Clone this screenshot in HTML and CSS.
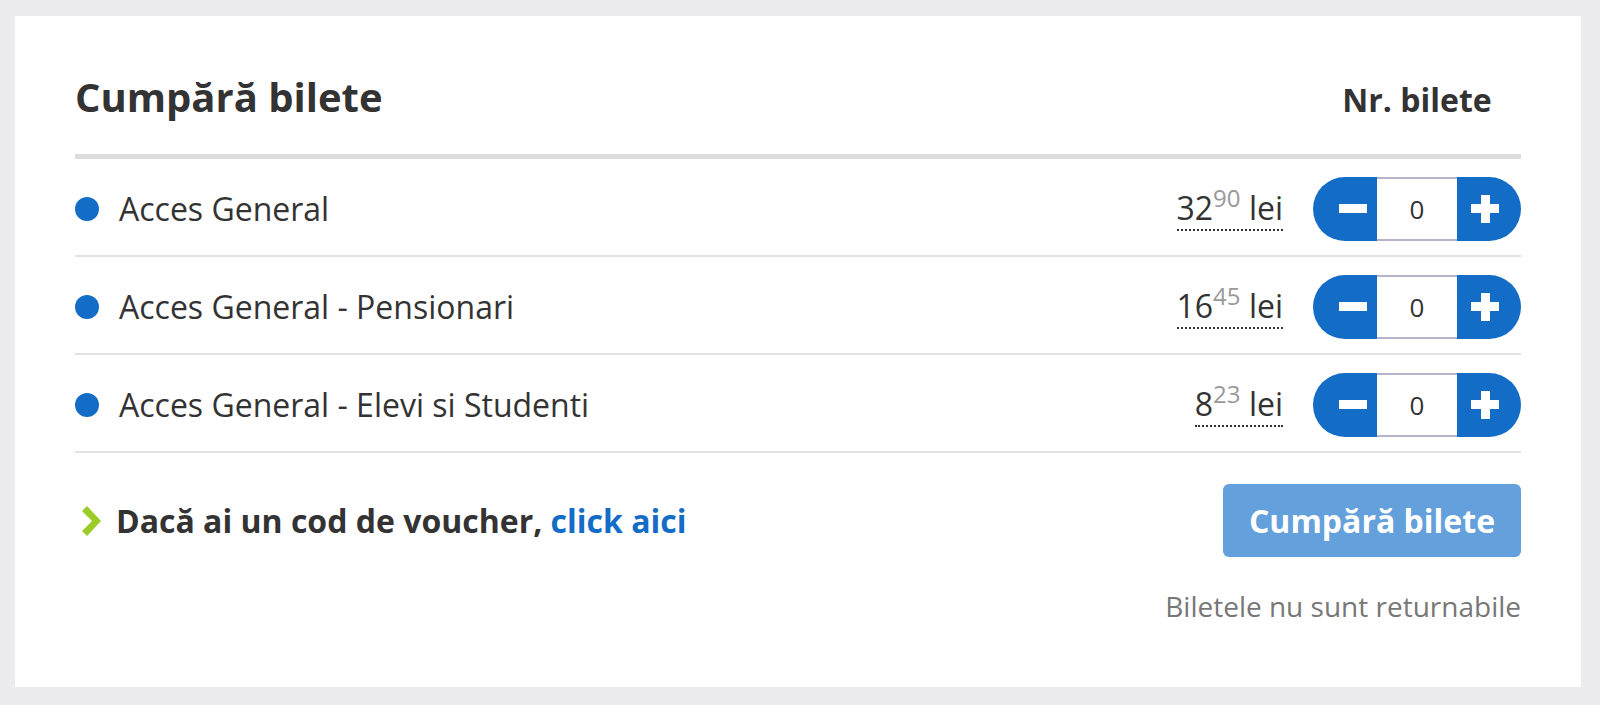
FILE: index.html
```html
<!DOCTYPE html>
<html lang="ro">
<head>
<meta charset="utf-8">
<title>Cumpără bilete</title>
<link rel="stylesheet" href="styles.css">
</head>
<body>
<div class="page">
  <div class="card">
    <div class="head">
      <h1 class="title">Cumpără bilete</h1>
      <div class="col-qty">Nr. bilete</div>
    </div>
    <ul class="tickets">
      <li class="ticket">
        <span class="dot"></span>
        <span class="name">Acces General</span>
        <span class="price">32<sup>90</sup> lei</span>
        <div class="stepper">
          <button class="step minus" type="button"><span class="minus-icon"></span></button>
          <span class="qty">0</span>
          <button class="step plus" type="button"><span class="plus-icon"></span></button>
        </div>
      </li>
      <li class="ticket">
        <span class="dot"></span>
        <span class="name">Acces General - Pensionari</span>
        <span class="price">16<sup>45</sup> lei</span>
        <div class="stepper">
          <button class="step minus" type="button"><span class="minus-icon"></span></button>
          <span class="qty">0</span>
          <button class="step plus" type="button"><span class="plus-icon"></span></button>
        </div>
      </li>
      <li class="ticket">
        <span class="dot"></span>
        <span class="name">Acces General - Elevi si Studenti</span>
        <span class="price">8<sup>23</sup> lei</span>
        <div class="stepper">
          <button class="step minus" type="button"><span class="minus-icon"></span></button>
          <span class="qty">0</span>
          <button class="step plus" type="button"><span class="plus-icon"></span></button>
        </div>
      </li>
    </ul>
    <div class="actions">
      <p class="voucher">
        <svg class="chev" viewBox="0 0 20 30" width="20" height="30" aria-hidden="true"><polygon points="0,5 5,0 19,15 5,30 0,25 10,15" fill="#9dcb27"/></svg>
        <span>Dacă ai un cod de voucher, <a href="#" class="link">click aici</a></span>
      </p>
      <button class="buy" type="button">Cumpără bilete</button>
    </div>
    <p class="note">Biletele nu sunt returnabile</p>
  </div>
</div>
</body>
</html>
```

FILE: styles.css
```css
* { box-sizing: border-box; }

html, body {
  margin: 0;
  padding: 0;
}

body {
  background: #ecebf0;
  font-family: "Open Sans", "Noto Sans", "Liberation Sans", sans-serif;
  color: #333333;
}

.page {
  padding: 16px 19px 18px 15px;
}

.card {
  background: #ffffff;
  padding: 0 60px 62px 60px;
  height: 671px;
}

.head {
  display: flex;
  align-items: baseline;
  justify-content: space-between;
  padding-top: 57px;
  padding-bottom: 33px;
  border-bottom: 5px solid #dddddd;
}

.title {
  margin: 0;
  font-size: 40px;
  line-height: 48px;
  font-weight: 700;
  color: #333333;
}

.col-qty {
  width: 208px;
  text-align: center;
  font-size: 32px;
  font-weight: 700;
  color: #333333;
}

.tickets {
  list-style: none;
  margin: 0;
  padding: 0;
}

.ticket {
  display: flex;
  align-items: center;
  height: 98px;
  padding-top: 3px;
  border-bottom: 2px solid #e2e1e7;
}

.dot {
  width: 24px;
  height: 24px;
  border-radius: 50%;
  background: #136dc7;
  flex: none;
  margin-right: 20px;
}

.name {
  flex: 1;
  font-size: 32px;
  color: #333333;
}

.price {
  display: inline-block;
  font-size: 32px;
  color: #333333;
  border-bottom: 2px dotted #333333;
  margin-right: 30px;
}

.price sup {
  font-size: 24px;
  line-height: 0;
  vertical-align: 13px;
  color: #999999;
}

.stepper {
  display: flex;
  width: 208px;
  height: 64px;
  flex: none;
}

.step {
  width: 64px;
  height: 64px;
  border: 0;
  padding: 0;
  margin: 0;
  background: #136dc7;
  display: flex;
  align-items: center;
  cursor: pointer;
}

.minus {
  border-radius: 32px 0 0 32px;
  justify-content: flex-end;
  padding-right: 10px;
}

.plus {
  border-radius: 0 32px 32px 0;
  justify-content: flex-start;
  padding-left: 14px;
}

.minus-icon {
  display: block;
  width: 28px;
  height: 9px;
  background: #ffffff;
}

.plus-icon {
  display: block;
  width: 28px;
  height: 28px;
  background:
    linear-gradient(#ffffff, #ffffff) center / 28px 9px no-repeat,
    linear-gradient(#ffffff, #ffffff) center / 9px 28px no-repeat;
}

.qty {
  width: 80px;
  height: 64px;
  border-top: 2px solid #b5b4c9;
  border-bottom: 2px solid #b5b4c9;
  display: flex;
  align-items: center;
  justify-content: center;
  font-size: 26px;
  color: #333333;
}

.actions {
  display: flex;
  align-items: center;
  justify-content: space-between;
  margin-top: 31px;
}

.voucher {
  margin: 0;
  display: flex;
  align-items: center;
  font-size: 32px;
  font-weight: 700;
  color: #333333;
}

.chev {
  display: block;
  margin-left: 7px;
  margin-right: 14px;
}

.link {
  color: #136dc7;
  text-decoration: none;
}

.buy {
  width: 298px;
  height: 73px;
  border: 0;
  border-radius: 6px;
  background: #64a0dc;
  color: #ffffff;
  font-family: "Open Sans", "Noto Sans", "Liberation Sans", sans-serif;
  font-size: 32px;
  font-weight: 700;
  padding: 0;
  cursor: pointer;
}

.note {
  margin: 30px 0 0 0;
  text-align: right;
  font-size: 28px;
  color: #777777;
}
```
